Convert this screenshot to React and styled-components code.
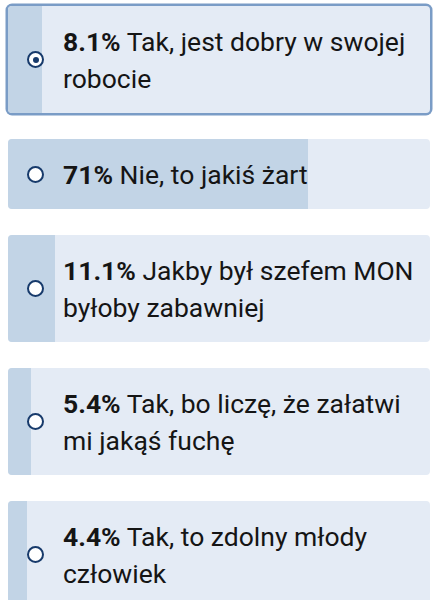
import React from "react";
import styled, { createGlobalStyle } from "styled-components";

const Global = createGlobalStyle`
  html, body { margin: 0; padding: 0; background: #ffffff; }
  body { font-family: Roboto, "Noto Sans", "Liberation Sans", sans-serif; }
`;

const List = styled.div`
  display: flex;
  flex-direction: column;
  gap: 26px;
  padding: 6px 4px 0 8px;
`;

const Option = styled.label`
  position: relative;
  display: flex;
  align-items: center;
  gap: 19px;
  padding: 16.5px 10px 16.5px 19px;
  background: #e4ebf5;
  border-radius: 4px;
  cursor: pointer;
  box-shadow: ${(p) => (p.$selected ? "0 0 0 2.5px #7a9cc6" : "none")};
`;

const Bar = styled.div`
  position: absolute;
  left: 0;
  top: 0;
  bottom: 0;
  background: #c2d4e6;
  border-radius: 4px 0 0 4px;
  z-index: 0;
`;

const Radio = styled.span`
  position: relative;
  z-index: 1;
  flex: 0 0 auto;
  width: 17px;
  height: 17px;
  box-sizing: border-box;
  border-radius: 50%;
  border: 2.5px solid #173a6b;
  background: #ffffff;
  display: flex;
  align-items: center;
  justify-content: center;
  &::after {
    content: "";
    display: ${(p) => (p.$checked ? "block" : "none")};
    width: 6px;
    height: 6px;
    border-radius: 50%;
    background: #173a6b;
  }
`;

const Text = styled.span`
  position: relative;
  z-index: 1;
  font-size: 26.5px;
  line-height: 37px;
  color: #151515;
`;

const Pct = styled.b`
  font-weight: 700;
`;

const options = [
  { pct: 8.1, label: "Tak, jest dobry w swojej robocie", selected: true },
  { pct: 71, label: "Nie, to jakiś żart" },
  { pct: 11.1, label: "Jakby był szefem MON byłoby zabawniej" },
  { pct: 5.4, label: "Tak, bo liczę, że załatwi mi jakąś fuchę" },
  { pct: 4.4, label: "Tak, to zdolny młody człowiek" },
];

export default function App() {
  return (
    <>
      <Global />
      <List>
        {options.map((o) => (
          <Option key={o.label} $selected={o.selected}>
            <Bar style={{ width: `${o.pct}%` }} />
            <Radio $checked={o.selected} />
            <Text>
              <Pct>{o.pct}%</Pct> {o.label}
            </Text>
          </Option>
        ))}
      </List>
    </>
  );
}
